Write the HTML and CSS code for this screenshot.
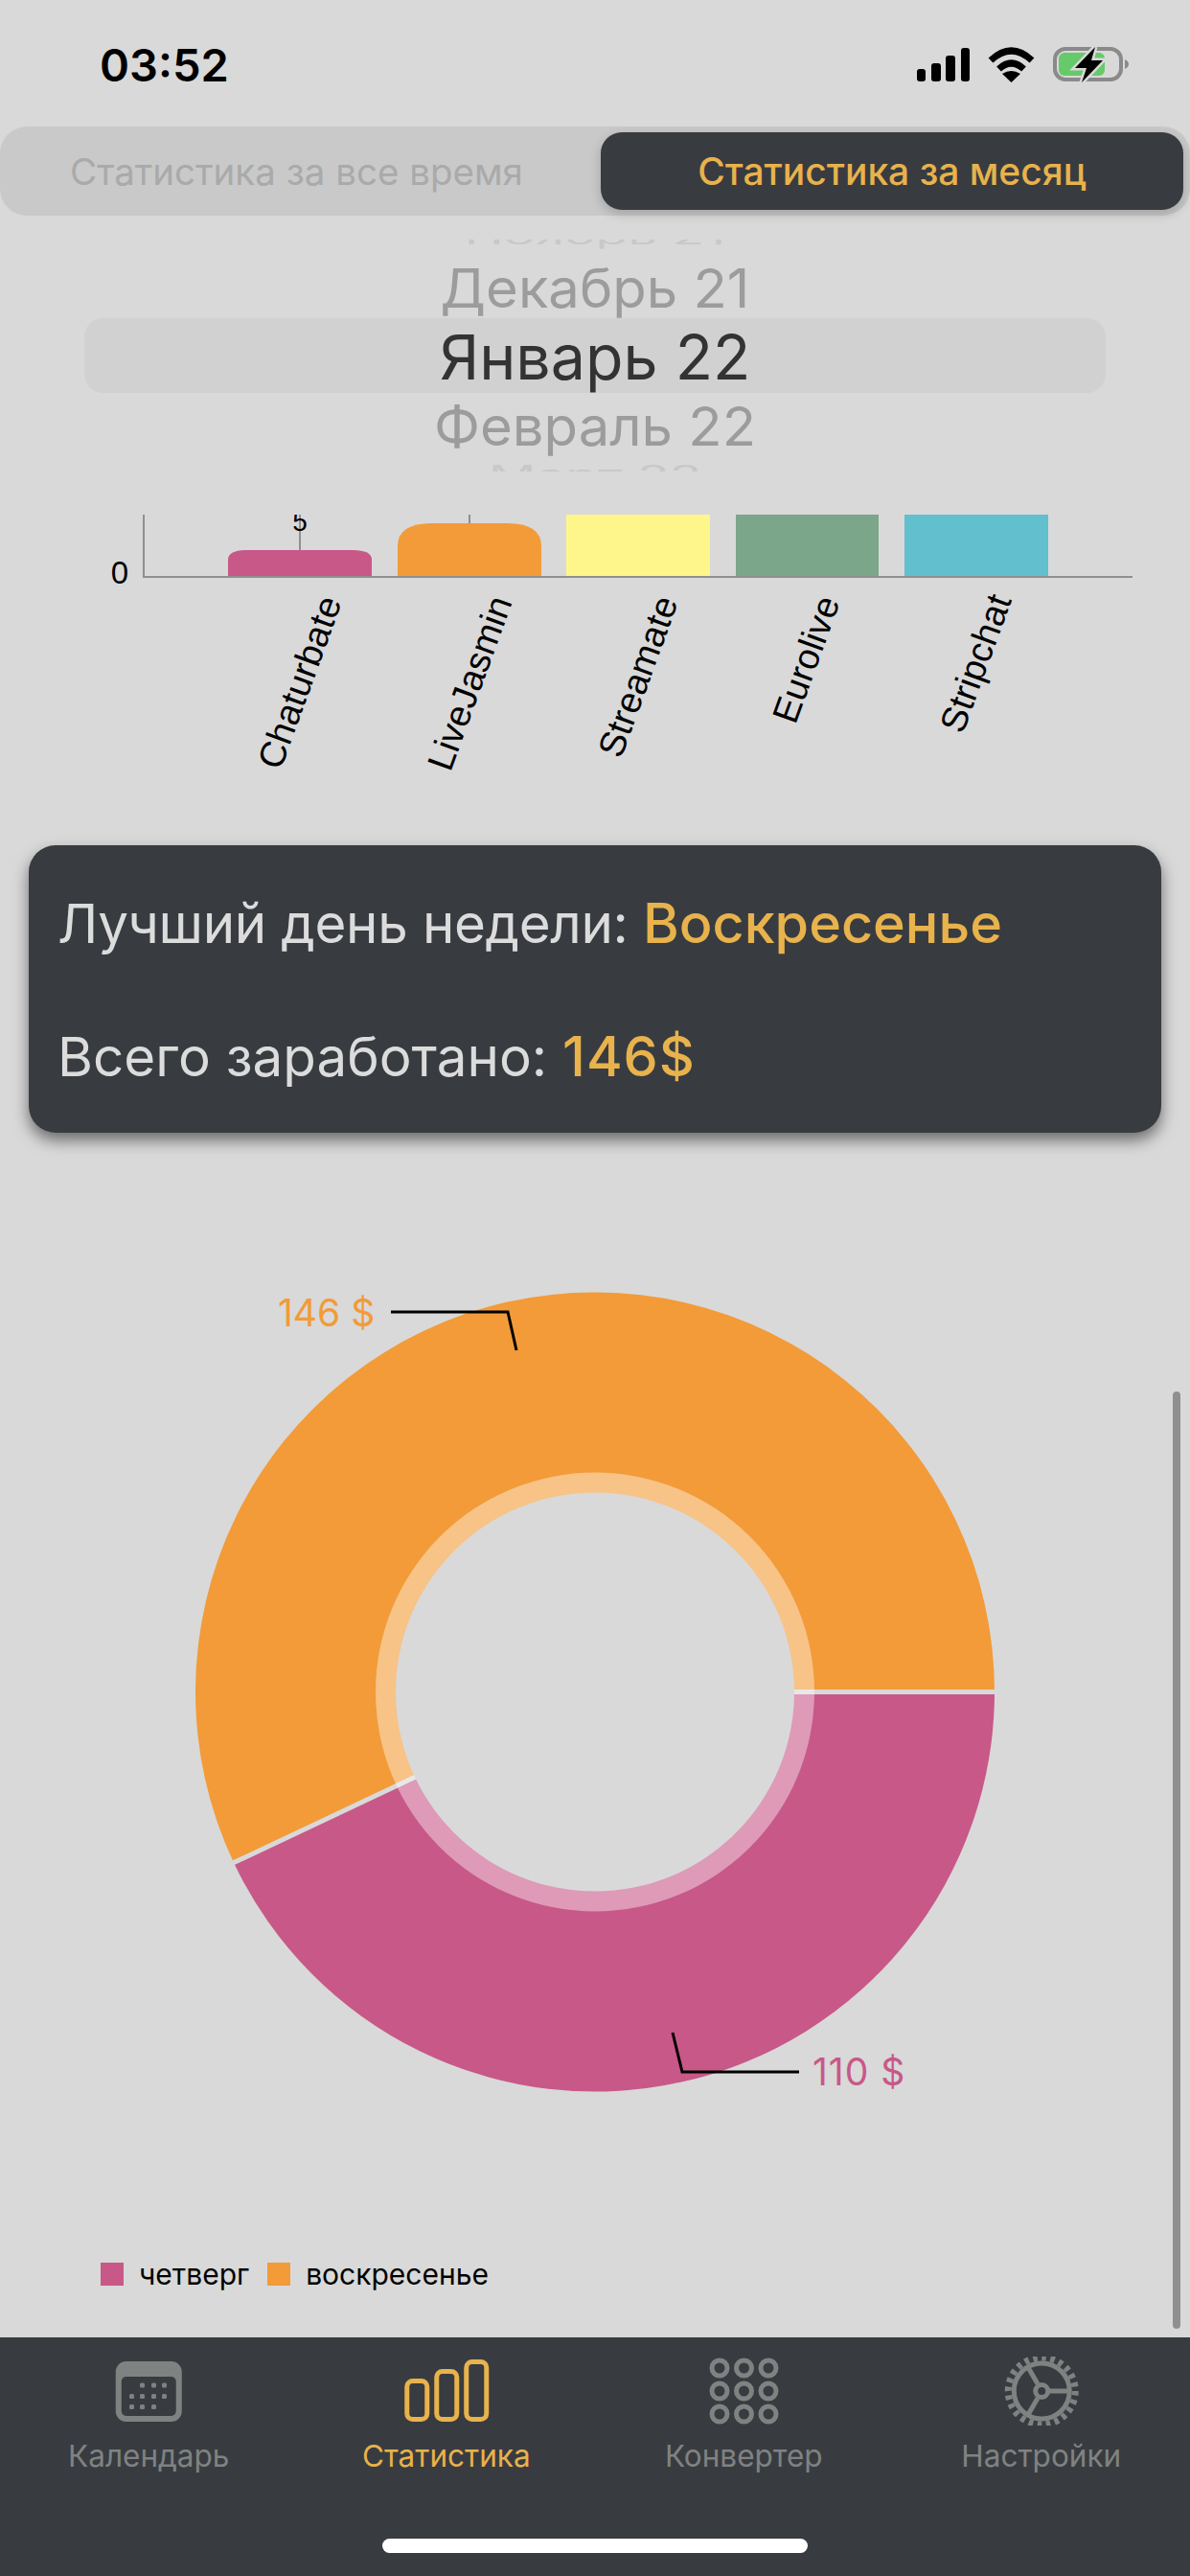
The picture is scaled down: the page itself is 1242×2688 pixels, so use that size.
FILE: index.html
```html
<!DOCTYPE html>
<html lang="ru">
<head>
    <meta charset="utf-8">
    <title>Статистика</title>
    <link rel="stylesheet" href="styles.css">
</head>
<body>
<div class="app">
    <!-- Status bar -->
    <div class="status-bar">
        <span class="time">03:52</span>
        <svg class="status-icons" viewBox="950 44 232 48" width="232" height="48">
            <rect x="957" y="72" width="9" height="13" rx="3"/>
            <rect x="972" y="66" width="10" height="19" rx="3"/>
            <rect x="987" y="58" width="10" height="27" rx="3"/>
            <rect x="1003" y="50" width="9" height="35" rx="3"/>
            <path class="wifi" d="M1034 63 Q1055.500 43 1077 63"/>
            <path class="wifi" d="M1042.500 72 Q1055.500 60 1068.500 72"/>
            <path d="M1046 77 Q1055.500 71 1065 77 L1055.500 86 Z"/>
            <rect class="batt-frame" x="1101" y="51" width="69" height="32" rx="11"/>
            <rect class="batt-fill" x="1105" y="55" width="48" height="24" rx="6"/>
            <path class="batt-nub" d="M1174 62 Q1178 64 1178 67 Q1178 70 1174 72 Z"/>
            <path class="bolt" d="M1143 49 L1122 71 L1134 71 L1129 86 L1151 63 L1139 63 Z"/>
        </svg>
    </div>

    <!-- Segment switch -->
    <div class="segment">
        <div class="segment-item">Статистика за все время</div>
        <div class="segment-item active">Статистика за месяц</div>
    </div>

    <!-- Month picker -->
    <div class="picker">
        <div class="picker-row far"><span>Ноябрь 21</span></div>
        <div class="picker-row near"><span>Декабрь 21</span></div>
        <div class="picker-row current"><span>Январь 22</span></div>
        <div class="picker-row near"><span>Февраль 22</span></div>
        <div class="picker-row far below"><span>Март 22</span></div>
    </div>

    <!-- Bar chart -->
    <svg class="bar-chart" viewBox="0 530 1242 290" width="1242" height="290">
        <defs>
            <clipPath id="plot-clip"><rect x="150" y="537" width="1040" height="70"/></clipPath>
        </defs>
        <g clip-path="url(#plot-clip)">
            <line class="tick" x1="313" y1="537" x2="313" y2="574"/>
            <line class="tick" x1="490" y1="537" x2="490" y2="546"/>
            <text class="bar-value" x="313" y="554">5</text>
        </g>
        <path fill="#c85888" d="M238 602 V584 Q238 574 258 574 H368 Q388 574 388 584 V602 Z"/>
        <path fill="#f29b38" d="M415 602 V570 Q415 546 451 546 H529 Q565 546 565 570 V602 Z"/>
        <rect fill="#fef68b" x="591" y="537" width="150" height="65"/>
        <rect fill="#7ba689" x="768" y="537" width="149" height="65"/>
        <rect fill="#62bfce" x="944" y="537" width="150" height="65"/>
        <line class="axis" x1="150" y1="537" x2="150" y2="602"/>
        <line class="axis" x1="149" y1="602" x2="1182" y2="602"/>
        <text class="axis-zero" x="125" y="609">0</text>
        <text class="bar-label" transform="translate(357 628) rotate(-70)">Chaturbate</text>
        <text class="bar-label" transform="translate(535 628) rotate(-70)">LiveJasmin</text>
        <text class="bar-label" transform="translate(708 628) rotate(-70)">Streamate</text>
        <text class="bar-label" transform="translate(877 628) rotate(-70)">Eurolive</text>
        <text class="bar-label" transform="translate(1056 626) rotate(-70)">Stripchat</text>
    </svg>

    <!-- Summary card -->
    <div class="summary">
        <p class="best-day">Лучший день недели: <b>Воскресенье</b></p>
        <p>Всего заработано: <b class="amount">146$</b></p>
    </div>

    <!-- Donut chart -->
    <svg class="donut" viewBox="0 1300 1242 920" width="1242" height="920">
        <path fill="#f29b38" d="M621 1765.500 L244 1943.700 A417 417 0 1 1 1038 1765.500 Z"/>
        <path fill="#c85888" d="M621 1765.500 L1038 1765.500 A417 417 0 0 1 244 1943.700 Z"/>
        <line class="donut-gap" x1="621" y1="1765.500" x2="1040" y2="1765.500"/>
        <line class="donut-gap" x1="621" y1="1765.500" x2="242" y2="1944.600"/>
        <circle cx="621" cy="1765.500" r="229" fill="#fff" fill-opacity="0.4"/>
        <circle cx="621" cy="1765.500" r="208" fill="#d9d9d9"/>
        <polyline class="callout" points="408,1369 530,1369 539,1409"/>
        <polyline class="callout" points="702,2121 712,2162 834,2162"/>
        <text class="value orange" x="290" y="1384">146 $</text>
        <text class="value pink" x="848" y="2176">110 $</text>
    </svg>

    <!-- Legend -->
    <div class="legend">
        <span class="swatch swatch-pink"></span><span class="legend-label">четверг</span>
        <span class="swatch swatch-orange"></span><span class="legend-label">воскресенье</span>
    </div>

    <div class="scrollbar"></div>

    <!-- Tab bar -->
    <div class="tabbar">
        <div class="tab">
            <svg class="tab-icon" viewBox="0 0 90 72" width="90" height="72">
                <rect x="10.750" y="5" width="69" height="63" rx="11" fill="#808282"/>
                <rect x="16.750" y="21" width="57" height="41" rx="5" fill="#383c40"/>
                <g fill="#808282">
                    <rect x="36" y="27.500" width="5" height="5" rx="1.500"/>
                    <rect x="48" y="27.500" width="5" height="5" rx="1.500"/>
                    <rect x="59" y="27.500" width="5" height="5" rx="1.500"/>
                    <rect x="25" y="39" width="5" height="5" rx="1.500"/>
                    <rect x="36" y="39" width="5" height="5" rx="1.500"/>
                    <rect x="48" y="39" width="5" height="5" rx="1.500"/>
                    <rect x="59" y="39" width="5" height="5" rx="1.500"/>
                    <rect x="25" y="50" width="5" height="5" rx="1.500"/>
                    <rect x="36" y="50" width="5" height="5" rx="1.500"/>
                    <rect x="48" y="50" width="5" height="5" rx="1.500"/>
                </g>
            </svg>
            <span class="tab-label">Календарь</span>
        </div>
        <div class="tab active">
            <svg class="tab-icon" viewBox="0 0 90 72" width="90" height="72">
                <rect x="3.750" y="25.500" width="21" height="40" rx="6"/>
                <rect x="34.750" y="15.500" width="21" height="50" rx="6"/>
                <rect x="65.750" y="5.500" width="21" height="60" rx="6"/>
            </svg>
            <span class="tab-label">Статистика</span>
        </div>
        <div class="tab">
            <svg class="tab-icon" viewBox="0 0 90 72" width="90" height="72">
                <circle cx="20" cy="12" r="8"/><circle cx="45.500" cy="12" r="8"/><circle cx="71" cy="12" r="8"/>
                <circle cx="20" cy="36" r="8"/><circle cx="45.500" cy="36" r="8"/><circle cx="71" cy="36" r="8"/>
                <circle cx="20" cy="60" r="8"/><circle cx="45.500" cy="60" r="8"/><circle cx="71" cy="60" r="8"/>
            </svg>
            <span class="tab-label">Конвертер</span>
        </div>
        <div class="tab">
            <svg class="tab-icon" viewBox="0 0 90 72" width="90" height="72">
                <circle class="gear-teeth" cx="45.250" cy="36" r="35" pathLength="24"/>
                <circle cx="45.250" cy="36" r="29"/>
                <circle cx="45.250" cy="36" r="6.500"/>
                <line x1="54" y1="36" x2="74" y2="36"/>
                <line x1="41" y1="28.500" x2="30.500" y2="10.500"/>
                <line x1="41" y1="43.500" x2="30.500" y2="61.500"/>
            </svg>
            <span class="tab-label">Настройки</span>
        </div>
        <div class="home-indicator"></div>
    </div>
</div>
</body>
</html>
```

FILE: styles.css
```css
html, body {
    margin: 0;
    padding: 0;
}
body {
    background: #d9d9d9;
    font-family: Inter, "Liberation Sans", sans-serif;
}
svg {
    display: block;
}
.app {
    position: relative;
    width: 1242px;
    height: 2688px;
    overflow: hidden;
    display: flex;
    flex-direction: column;
}

/* status bar */
.status-bar {
    height: 132px;
    box-sizing: border-box;
    padding: 44px 60px 0 104px;
    display: flex;
    justify-content: space-between;
    align-items: flex-start;
}
.time {
    font-size: 47px;
    line-height: 48px;
    font-weight: 600;
    color: #000;
}
.status-icons {
    fill: #000;
}
.wifi {
    fill: none;
    stroke: #000;
    stroke-width: 7;
}
.batt-frame {
    fill: none;
    stroke: #8a8a8a;
    stroke-width: 4;
}
.batt-fill {
    fill: #66c96a;
}
.batt-nub {
    fill: #8a8a8a;
}
.bolt {
    fill: #000;
    stroke: #d9d9d9;
    stroke-width: 5;
    paint-order: stroke;
}

/* segment */
.segment {
    height: 93px;
    box-sizing: border-box;
    padding: 6px 7px 6px 0;
    background: #c9c9c9;
    border-radius: 28px;
    display: flex;
}
.segment-item {
    flex: 1;
    display: flex;
    align-items: center;
    justify-content: center;
    padding-right: 8px;
    font-size: 38.500px;
    color: #a9aaaa;
}
.segment-item.active {
    flex: none;
    width: 608px;
    padding-right: 0;
    background: #383c40;
    border-radius: 22px;
    color: #e8b24c;
    font-size: 39px;
    font-weight: 500;
    box-shadow: 0 4px 12px rgba(0, 0, 0, 0.2);
}

/* month picker */
.picker {
    height: 242px;
    margin-top: 25px;
    overflow: hidden;
    display: flex;
    flex-direction: column;
    justify-content: center;
    flex-shrink: 0;
}
.picker-row {
    flex-shrink: 0;
    box-sizing: border-box;
    padding-top: 4px;
    display: flex;
    align-items: center;
    justify-content: center;
}
.picker-row span {
    display: block;
    line-height: 1;
}
.picker-row.current {
    height: 78px;
    margin: 0 88px;
    background: #d1d1d1;
    border-radius: 20px;
    color: #333;
    font-size: 64.500px;
}
.picker-row.near {
    height: 66px;
    color: #9c9c9c;
    font-size: 58px;
}
.picker-row.near span {
    transform: scaleY(0.97);
}
.picker-row.far {
    height: 44px;
    color: #c8c8c8;
    font-size: 55px;
}
.picker-row.far span {
    transform: scaleY(0.42);
}
.picker-row.far.below {
    padding-top: 0;
    padding-bottom: 6px;
}
.picker-row.far.below span {
    transform: scaleY(0.5);
}

/* bar chart */
.bar-chart {
    margin-top: 38px;
    flex-shrink: 0;
}
.tick {
    stroke: #8f8f8f;
    stroke-width: 2;
}
.axis {
    stroke: #8f8f8f;
    stroke-width: 2;
}
.bar-value {
    font: 28px "Liberation Sans", sans-serif;
    text-anchor: middle;
}
.axis-zero {
    font: 33px "Liberation Sans", sans-serif;
    text-anchor: middle;
}
.bar-label {
    font: 38px "Liberation Sans", sans-serif;
    text-anchor: end;
}

/* summary card */
.summary {
    height: 300px;
    margin: 62px 30px 0;
    padding: 48px 30px 0;
    box-sizing: border-box;
    flex-shrink: 0;
    background: #383c40;
    border-radius: 28px;
    box-shadow: 0 8px 16px rgba(0, 0, 0, 0.5);
    color: #dcdcdc;
    font-size: 56.500px;
}
.summary p {
    margin: 0 0 72px;
    line-height: 66px;
}
.summary .best-day {
    letter-spacing: -0.350px;
}
.summary b {
    font-weight: 500;
    font-size: 57.500px;
    letter-spacing: 0;
    color: #e8b24c;
}
.summary .amount {
    letter-spacing: 1px;
}

/* donut */
.donut {
    margin-top: 118px;
    flex-shrink: 0;
}
.donut-gap {
    stroke: #d9d9d9;
    stroke-width: 5;
}
.callout {
    fill: none;
    stroke: #000;
    stroke-width: 3;
}
.value {
    font-size: 39px;
}
.orange {
    fill: #f29b38;
}
.pink {
    fill: #c85888;
    letter-spacing: 1px;
}

/* legend */
.legend {
    margin-top: 141px;
    padding-left: 105px;
    display: flex;
    align-items: center;
    height: 24px;
    font-size: 30px;
    color: #000;
}
.swatch {
    width: 24px;
    height: 24px;
    margin-right: 16px;
}
.swatch-pink {
    background: #c85888;
}
.swatch-orange {
    background: #f29b38;
}
.legend-label {
    margin-right: 19px;
}

.scrollbar {
    position: absolute;
    left: 1224px;
    top: 1452px;
    width: 8px;
    height: 978px;
    background: #8f8f8f;
    border-radius: 4px;
}

/* tab bar */
.tabbar {
    position: relative;
    margin-top: auto;
    height: 249px;
    box-sizing: border-box;
    padding-top: 20px;
    background: #383c40;
    display: grid;
    grid-template-columns: repeat(4, 1fr);
    align-items: start;
}
.tab {
    display: flex;
    flex-direction: column;
    align-items: center;
    gap: 15px;
    color: #808282;
}
.tab.active {
    color: #e8b24c;
}
.tab-icon {
    fill: none;
    stroke: #808282;
    stroke-width: 5;
}
.tab:first-child .tab-icon {
    stroke: none;
}
.tab.active .tab-icon {
    stroke: #e8b24c;
}
.gear-teeth {
    stroke-width: 7;
    stroke-dasharray: 0.5 0.5;
}
.tab-label {
    font-size: 31.500px;
    line-height: 34px;
}
.home-indicator {
    position: absolute;
    left: 399px;
    top: 210px;
    width: 444px;
    height: 15px;
    background: #fff;
    border-radius: 8px;
}
```
